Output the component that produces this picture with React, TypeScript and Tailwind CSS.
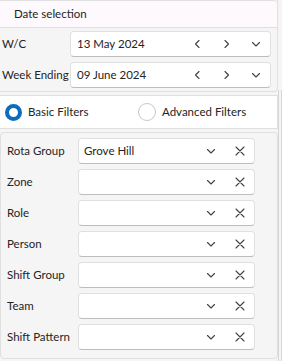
import React from 'react';

const font = { fontFamily: 'Lato, "Noto Sans", sans-serif' };

const Chevron = ({ dir }: { dir: 'left' | 'right' | 'down' }) => {
  const d = dir === 'left' ? 'M6 1.5 L2.5 5 L6 8.5' : dir === 'right' ? 'M3 1.5 L6.5 5 L3 8.5' : 'M1.5 3.5 L5 7 L8.5 3.5';
  return (
    <svg width="10" height="10" viewBox="0 0 10 10" className="shrink-0">
      <path d={d} fill="none" stroke="#424242" strokeWidth="1.1" strokeLinecap="round" strokeLinejoin="round" />
    </svg>
  );
};

const Cross = () => (
  <svg width="12" height="12" viewBox="0 0 12 12" className="shrink-0">
    <path d="M2 2 L10 10 M10 2 L2 10" fill="none" stroke="#424242" strokeWidth="1.1" strokeLinecap="round" />
  </svg>
);

const DateRow = ({ label, value }: { label: string; value: string }) => (
  <div className="flex items-center h-[26px]">
    <span className="w-[70px] pl-[2px] text-[11.5px] text-[#242424] whitespace-nowrap">{label}</span>
    <div className="flex items-center w-[201px] h-[26px] bg-white rounded-[4px] border border-[#e0e0e0] border-b-[#bdbdbd] pl-[6px]">
      <span className="flex-1 text-[11.5px] text-[#242424]">{value}</span>
      <div className="w-[29px] flex justify-center"><Chevron dir="left" /></div>
      <div className="w-[29px] flex justify-center"><Chevron dir="right" /></div>
      <div className="w-[29px] flex justify-center"><Chevron dir="down" /></div>
    </div>
  </div>
);

const FilterRow = ({ label, value }: { label: string; value?: string }) => (
  <div className="flex items-center h-[26px]">
    <span className="w-[71px] text-[11.5px] text-[#242424] whitespace-nowrap">{label}</span>
    <div className="flex items-center w-[177px] h-[26px] bg-white rounded-[4px] border border-[#e0e0e0] border-b-[#bdbdbd] pl-[5px]">
      <span className="flex-1 text-[11.5px] text-[#242424]">{value}</span>
      <div className="w-[29px] flex justify-center"><Chevron dir="down" /></div>
      <div className="w-[29px] flex justify-center"><Cross /></div>
    </div>
  </div>
);

const filters = ['Rota Group', 'Zone', 'Role', 'Person', 'Shift Group', 'Team', 'Shift Pattern'];

export default function App() {
  return (
    <div className="w-[282px] h-[361px] bg-[#f5f5f5] flex overflow-hidden" style={font}>
      <div className="w-[278px] flex flex-col">
        <div className="border-r border-b border-[#e0e0e0] rounded-br-[4px] h-[92px] flex flex-col">
          <div className="h-[28px] bg-[#fdf9fd] border-t border-b border-[#e0e0e0] rounded-tr-[4px] flex items-center pl-[14px] text-[11.5px] text-[#242424]">
            Date selection
          </div>
          <div className="flex flex-col gap-[5px] pt-[3px]">
            <DateRow label="W/C" value="13 May 2024" />
            <DateRow label="Week Ending" value="09 June 2024" />
          </div>
        </div>
        <div className="mt-[3px] h-[34px] bg-white border border-[#e0e0e0] border-l-0 flex items-center text-[11.5px] text-[#242424]">
          <div className="flex items-center w-[138px] pl-[5px]">
            <span className="w-[17px] h-[17px] rounded-full border-[4px] border-[#0f6cbd] mr-[6px]" />
            Basic Filters
          </div>
          <div className="flex items-center">
            <span className="w-[18px] h-[18px] rounded-full border border-[#c8c8c8] bg-white mr-[6px]" />
            Advanced Filters
          </div>
        </div>
        <div className="mt-[3px] h-[227px] border border-[#e0e0e0] rounded-[4px] bg-[#f5f5f5] pl-[6px] pt-[5px] flex flex-col gap-[5px]">
          {filters.map((f, i) => (
            <FilterRow key={f} label={f} value={i === 0 ? 'Grove Hill' : undefined} />
          ))}
        </div>
      </div>
      <div className="w-[4px] border-l border-r border-[#d6d6d6] mt-[90px]" />
    </div>
  );
}
